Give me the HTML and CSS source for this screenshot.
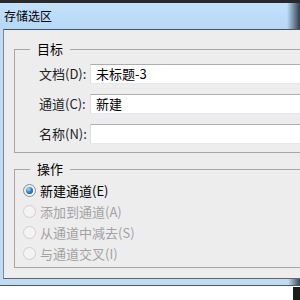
FILE: index.html
```html
<!DOCTYPE html>
<html lang="zh-CN">
    <head>
        <meta charset="UTF-8" />
        <title>存储选区</title>
        <link rel="stylesheet" href="styles.css">
    </head>
    <body>
        <div class="window">
            <div class="titlebar">
                <span class="title">存储选区</span>
                <span class="title-edge"></span>
            </div>
            <div class="frame">
                <div class="client">
                    <fieldset class="group">
                        <legend>目标</legend>
                        <div class="field">
                            <label>文档(D):</label>
                            <div class="input">未标题-3</div>
                        </div>
                        <div class="field">
                            <label>通道(C):</label>
                            <div class="input">新建</div>
                        </div>
                        <div class="field">
                            <label>名称(N):</label>
                            <div class="input"></div>
                        </div>
                    </fieldset>
                    <fieldset class="group group-op">
                        <legend>操作</legend>
                        <div class="option"><span class="radio checked"></span>新建通道(E)</div>
                        <div class="option disabled"><span class="radio"></span>添加到通道(A)</div>
                        <div class="option disabled"><span class="radio"></span>从通道中减去(S)</div>
                        <div class="option disabled"><span class="radio"></span>与通道交叉(I)</div>
                    </fieldset>
                </div>
            </div>
            <div class="below"><span class="corner"></span></div>
        </div>
    </body>
</html>
```

FILE: styles.css
```css
html,
body {
    margin: 0;
}

body {
    width: 300px;
    height: 300px;
    overflow: hidden;
    background-color: #fff;
    font-family: "Noto Sans CJK SC", "DejaVu Sans", sans-serif;
    font-size: 13px;
    line-height: 16px;
    color: #111;
}

.window {
    border-top: 3px solid #262a2f;
}

.titlebar {
    height: 26px;
    display: flex;
    align-items: center;
    background: linear-gradient(#c3e1fb, #b5d8f6);
}

.title {
    flex: 1;
    padding-left: 4px;
    font-size: 12px;
    color: #000;
}

.title-edge {
    width: 13px;
    align-self: stretch;
    background: linear-gradient(to right, rgba(58, 68, 80, 0), #333c47);
}

.frame {
    padding-left: 3px;
    padding-bottom: 6px;
    background: linear-gradient(to right, #c0dcf4 0, #c0dcf4 288px, #3a4552 300px);
    border-bottom: 1px solid #4d5966;
}

.client {
    height: 248px;
    overflow: hidden;
    background-color: #eeedee;
    border-top: 1px solid #4a525c;
    border-left: 1px solid #7d8a99;
    border-bottom: 1px solid #5b6570;
}

.group {
    width: 320px;
    margin: 11px 0 0 10px;
    padding: 7px 0 8px 0;
    border: 1px solid #a6a6a6;
}

.group legend {
    margin-left: 15px;
    padding: 0 7px;
    color: #000;
}

.field {
    display: flex;
    align-items: center;
    height: 20px;
}

.field + .field {
    margin-top: 10px;
}

.field label {
    width: 51px;
    margin-left: 24px;
    color: #222;
}

.input {
    flex: 1;
    height: 20px;
    box-sizing: border-box;
    padding-left: 5px;
    line-height: 18px;
    background-color: #fff;
    border: 1px solid;
    border-color: #abadb3 #e2e3ea #e3e9ef #dbdfe6;
    color: #000;
}

.group-op {
    margin-top: 8px;
    padding: 3px 0 3px 0;
}

.option {
    display: flex;
    align-items: center;
    gap: 4px;
    height: 21px;
    margin-left: 8px;
    color: #000;
}

.option.disabled {
    color: #a2a2a2;
}

.radio {
    width: 13px;
    height: 13px;
    box-sizing: border-box;
    border-radius: 50%;
    border: 1px solid #8e8f8f;
    background: linear-gradient(135deg, #e3e3e3, #fcfcfc);
    display: flex;
    align-items: center;
    justify-content: center;
}

.option.disabled .radio {
    border-color: #cfcfcf;
    background: #f3f3f3;
}

.radio.checked::after {
    content: "";
    width: 7px;
    height: 7px;
    border-radius: 50%;
    background: radial-gradient(circle at 35% 30%, #a8dcff 0, #2f8bd0 45%, #0d3f72 100%);
}

.below {
    display: flex;
    justify-content: flex-end;
    height: 14px;
}

.corner {
    width: 7px;
    margin-top: 1px;
    background-color: #1b1b1b;
}
```
